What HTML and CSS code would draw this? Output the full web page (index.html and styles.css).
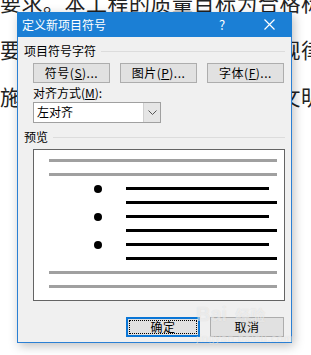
FILE: index.html
```html
<!DOCTYPE html>
<html lang="zh-CN">

<head>
    <meta charset="UTF-8">
    <meta name="viewport" content="width=device-width, initial-scale=1.0">
    <title>定义新项目符号</title>
    <link rel="stylesheet" href="styles.css">
</head>

<body>
    <div class="doc">
        <p>要求。本工程的质量目标为合格标准</p>
        <p>要求，施工中都必须严格遵守规律</p>
        <p>施工过程中加强现场管理，创文明工地</p>
    </div>

    <div class="dialog">
        <div class="titleBar">
            <span class="title">定义新项目符号</span>
            <span class="help">?</span>
            <svg class="close" width="11" height="11" viewBox="0 0 11 11">
                <path d="M0.5 0.5 L10.5 10.5 M10.5 0.5 L0.5 10.5" stroke="#fff" stroke-width="1.2" fill="none" />
            </svg>
        </div>

        <div class="body">
            <div class="groupHead">
                <span>项目符号字符</span>
                <span class="rule"></span>
            </div>
            <div class="btnRow">
                <button class="btn">符号(<u>S</u>)...</button>
                <button class="btn">图片(<u>P</u>)...</button>
                <button class="btn">字体(<u>F</u>)...</button>
            </div>

            <div class="fieldLabel">对齐方式(<u>M</u>):</div>
            <div class="select">
                <span class="selectText">左对齐</span>
                <span class="selectArrow">
                    <svg width="9" height="6" viewBox="0 0 9 6">
                        <polyline points="0.5,0.5 4.5,4.5 8.5,0.5" stroke="#555" stroke-width="1" fill="none" />
                    </svg>
                </span>
            </div>

            <div class="groupHead preview-head">
                <span>预览</span>
                <span class="rule"></span>
            </div>
            <div class="preview">
                <div class="line grey"></div>
                <div class="line grey"></div>
                <div class="row">
                    <span class="bullet"></span>
                    <div class="line black short"></div>
                </div>
                <div class="line black indent"></div>
                <div class="row">
                    <span class="bullet"></span>
                    <div class="line black short"></div>
                </div>
                <div class="line black indent"></div>
                <div class="row">
                    <span class="bullet"></span>
                    <div class="line black short"></div>
                </div>
                <div class="line black indent"></div>
                <div class="line grey"></div>
                <div class="line grey"></div>
            </div>

            <div class="footer">
                <button class="btn okBtn"><span class="focus">确定</span></button>
                <button class="btn">取消</button>
            </div>
        </div>
    </div>

    <div class="watermark">
        <span class="wmLogo">Bai<span class="wmCn">经验</span></span>
        <span class="wmUrl">jingyan.baidu.com</span>
    </div>
</body>

</html>
```

FILE: styles.css
```css
* {
    margin: 0;
    box-sizing: border-box;
}

body {
    width: 311px;
    height: 355px;
    overflow: hidden;
    background: #fff;
    font-family: "Noto Sans CJK SC", sans-serif;
}

.doc {
    margin-top: -21px;
    font-size: 21px;
    line-height: 47px;
    letter-spacing: 0.5px;
    color: #222;
    white-space: nowrap;
    overflow: hidden;
}

.dialog {
    position: absolute;
    left: 17px;
    top: 12px;
    width: 275px;
    height: 331px;
    border: 1px solid #2b80d4;
    background: #f0f0f0;
    box-shadow: 2px 3px 10px rgba(0, 0, 0, 0.25);
    font-size: 12px;
    line-height: 14px;
    color: #000;
}

.titleBar {
    height: 25px;
    margin: -1px -1px 0;
    background: #1b7fd5;
    color: #fff;
    display: flex;
    align-items: center;
    padding-left: 5px;
}

.title {
    flex: 1;
}

.help {
    width: 12px;
    margin-right: 33px;
    font-size: 13px;
}

.close {
    margin-right: 17px;
}

.body {
    padding: 0 6px;
}

.groupHead {
    display: flex;
    align-items: center;
    gap: 5px;
    margin-top: 7px;
    height: 14px;
}

.rule {
    flex: 1;
    border-top: 1px solid #dcdcdc;
}

.btnRow {
    display: flex;
    gap: 10px;
    margin-top: 5px;
    padding-left: 9px;
}

.btn {
    width: 77px;
    height: 20px;
    padding: 0;
    border: 1px solid #adadad;
    background: #e1e1e1;
    font-family: "Noto Sans CJK SC", sans-serif;
    font-size: 12px;
    line-height: 14px;
    color: #000;
    letter-spacing: 0.5px;
}

.fieldLabel {
    margin-top: 3px;
    padding-left: 9px;
}

.select {
    display: flex;
    margin: 2px 0 0 9px;
    width: 128px;
    height: 21px;
    border: 1px solid #a0a0a0;
    background: #fff;
}

.selectText {
    flex: 1;
    padding: 2px 0 0 3px;
}

.selectArrow {
    width: 17px;
    background: #e5e5e5;
    border-left: 1px solid #d0d0d0;
    display: flex;
    align-items: center;
    justify-content: center;
}

.preview-head {
    margin-top: 7px;
}

.preview {
    margin: 5px 0 0 9px;
    width: 252px;
    height: 152px;
    border: 1px solid #646464;
    background: #fff;
    padding: 9px 7px 12px 15px;
    display: flex;
    flex-direction: column;
    gap: 11px;
}

.line {
    height: 3px;
}

.grey {
    background: #a0a0a0;
}

.black {
    background: #000;
}

.indent {
    margin-left: 77px;
}

.row {
    display: flex;
    align-items: center;
    height: 3px;
}

.bullet {
    flex: none;
    width: 8px;
    height: 8px;
    border-radius: 50%;
    background: #000;
    margin-left: 45px;
}

.short {
    flex: 1;
    margin: 0 8px 0 24px;
}

.footer {
    display: flex;
    justify-content: flex-end;
    gap: 10px;
    margin: 16px 1px 0 0;
}

.footer .btn {
    width: 74px;
}

.okBtn {
    border: 2px solid #0a76d6;
    padding: 1px;
}

.focus {
    display: block;
    height: 100%;
    border: 1px dotted #000;
    line-height: 12px;
}

.watermark {
    position: absolute;
    left: 196px;
    top: 302px;
    display: flex;
    flex-direction: column;
    color: rgba(255, 255, 255, 0.55);
    text-shadow: 0 0 1px rgba(0, 0, 0, 0.12);
    font-family: "Liberation Sans", sans-serif;
    pointer-events: none;
}

.wmLogo {
    font-size: 20px;
    font-weight: bold;
    line-height: 24px;
}

.wmCn {
    font-family: "Noto Sans CJK SC", sans-serif;
    font-size: 15px;
    margin-left: 8px;
}

.wmUrl {
    font-size: 11px;
    line-height: 14px;
    margin-top: 4px;
    letter-spacing: 0.5px;
}
```
